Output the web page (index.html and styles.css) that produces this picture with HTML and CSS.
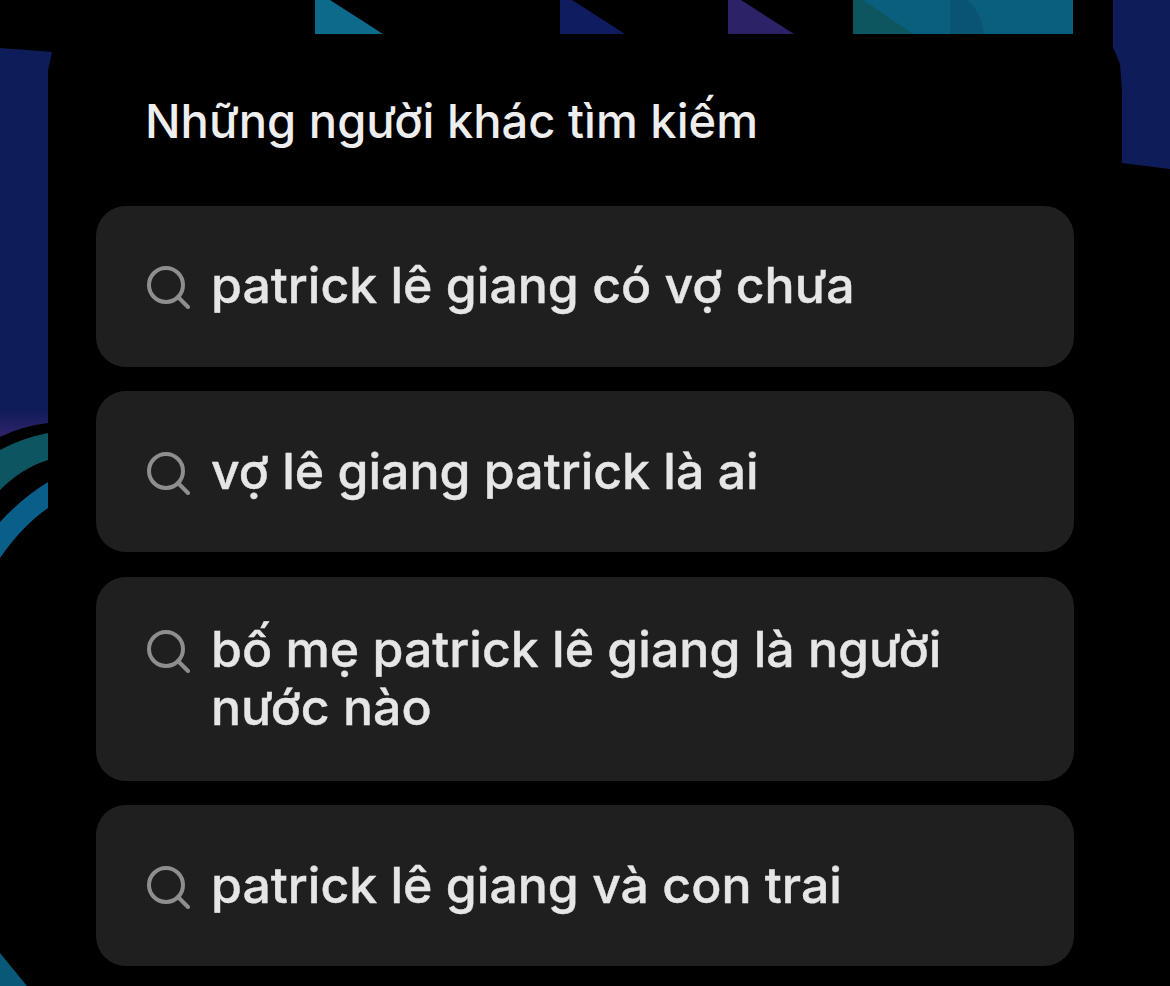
FILE: index.html
```html
<!DOCTYPE html>
<html lang="vi">
<head>
    <meta charset="UTF-8">
    <meta name="viewport" content="width=device-width, initial-scale=1.0">
    <title>Những người khác tìm kiếm</title>
    <link rel="stylesheet" href="styles.css">
</head>
<body>
    <svg class="backdrop" width="1170" height="986" viewBox="0 0 1170 986" aria-hidden="true">
        <defs>
            <linearGradient id="navyFade" x1="0" y1="0" x2="0" y2="1">
                <stop offset="0.93" stop-color="#0f1c5a"/>
                <stop offset="0.99" stop-color="#2c2268"/>
            </linearGradient>
        </defs>
        <path fill="url(#navyFade)" d="M0 48L52 52L48 70V423Q22 426 0 437Z"/>
        <path fill="#0d5560" d="M0 450Q22 438 48 433V460Q22 468 0 490Z"/>
        <path fill="#0a5f8a" d="M0 522Q22 498 48 482V508Q22 526 0 558Z"/>
        <path fill="#0a5878" d="M0 953L27 986H0Z"/>
        <path fill="#0d6a8a" d="M315 0H330L383 34H315Z"/>
        <path fill="#0f1d60" d="M560 0H572L625 34H560Z"/>
        <path fill="#2c2268" d="M728 0H741L794 34H728Z"/>
        <rect fill="#0a5f7e" x="853" y="0" width="220" height="34"/>
        <path fill="#0d5660" d="M853 0H863L913 34H853Z"/>
        <path fill="#095475" d="M950 0H968Q982 14 984 34H950Z"/>
        <path fill="#0f1c5a" d="M1113 0H1170V169L1122 163V90L1120 64L1113 47Z"/>
    </svg>

    <main class="panel">
        <h2 class="panel-title">Những người khác tìm kiếm</h2>
        <ul class="search-list">
            <li class="search-item">
                <div class="search-row">
                    <svg class="search-icon" viewBox="0 0 44 44"><circle cx="20" cy="20" r="17"/><path d="M32 32L42 42"/></svg>
                    <span class="search-text">patrick lê giang có vợ chưa</span>
                </div>
            </li>
            <li class="search-item">
                <div class="search-row">
                    <svg class="search-icon" viewBox="0 0 44 44"><circle cx="20" cy="20" r="17"/><path d="M32 32L42 42"/></svg>
                    <span class="search-text">vợ lê giang patrick là ai</span>
                </div>
            </li>
            <li class="search-item">
                <div class="search-row">
                    <svg class="search-icon" viewBox="0 0 44 44"><circle cx="20" cy="20" r="17"/><path d="M32 32L42 42"/></svg>
                    <span class="search-text">bố mẹ patrick lê giang là người nước nào</span>
                </div>
            </li>
            <li class="search-item">
                <div class="search-row">
                    <svg class="search-icon" viewBox="0 0 44 44"><circle cx="20" cy="20" r="17"/><path d="M32 32L42 42"/></svg>
                    <span class="search-text">patrick lê giang và con trai</span>
                </div>
            </li>
        </ul>
    </main>
</body>
</html>
```
FILE: styles.css
```css
body {
    margin: 0;
    height: 986px;
    overflow: hidden;
    background-color: #000;
    font-family: Inter, "Liberation Sans", Arial, sans-serif;
    color: #e8e8e8;
}

.backdrop {
    position: absolute;
    top: 0;
    left: 0;
}

.panel {
    position: relative;
    box-sizing: border-box;
    width: 1170px;
    padding: 94px 96px 0;
}

.panel-title {
    margin: 0 0 57.5px 49px;
    font-size: 47.1px;
    line-height: 54px;
    font-weight: 500;
    color: #eee;
}

.search-list {
    list-style: none;
    margin: 0;
    padding: 0;
    display: flex;
    flex-direction: column;
    gap: 24.5px;
}

.search-item {
    display: flex;
    align-items: center;
    box-sizing: border-box;
    width: 978px;
    min-height: 161px;
    padding: 43px 50px 45px;
    background-color: #1f1f1f;
    border-radius: 30px;
}

.search-row {
    display: flex;
    align-items: flex-start;
    gap: 21px;
}

.search-icon {
    flex: none;
    width: 44px;
    height: 44px;
    margin-top: 9px;
    fill: none;
    stroke: #8e8e8e;
    stroke-width: 4;
    stroke-linecap: round;
}

.search-text {
    font-size: 50px;
    line-height: 58px;
    font-weight: 500;
    color: #e6e6e6;
    -webkit-text-stroke: 0.4px #e6e6e6;
}
```
